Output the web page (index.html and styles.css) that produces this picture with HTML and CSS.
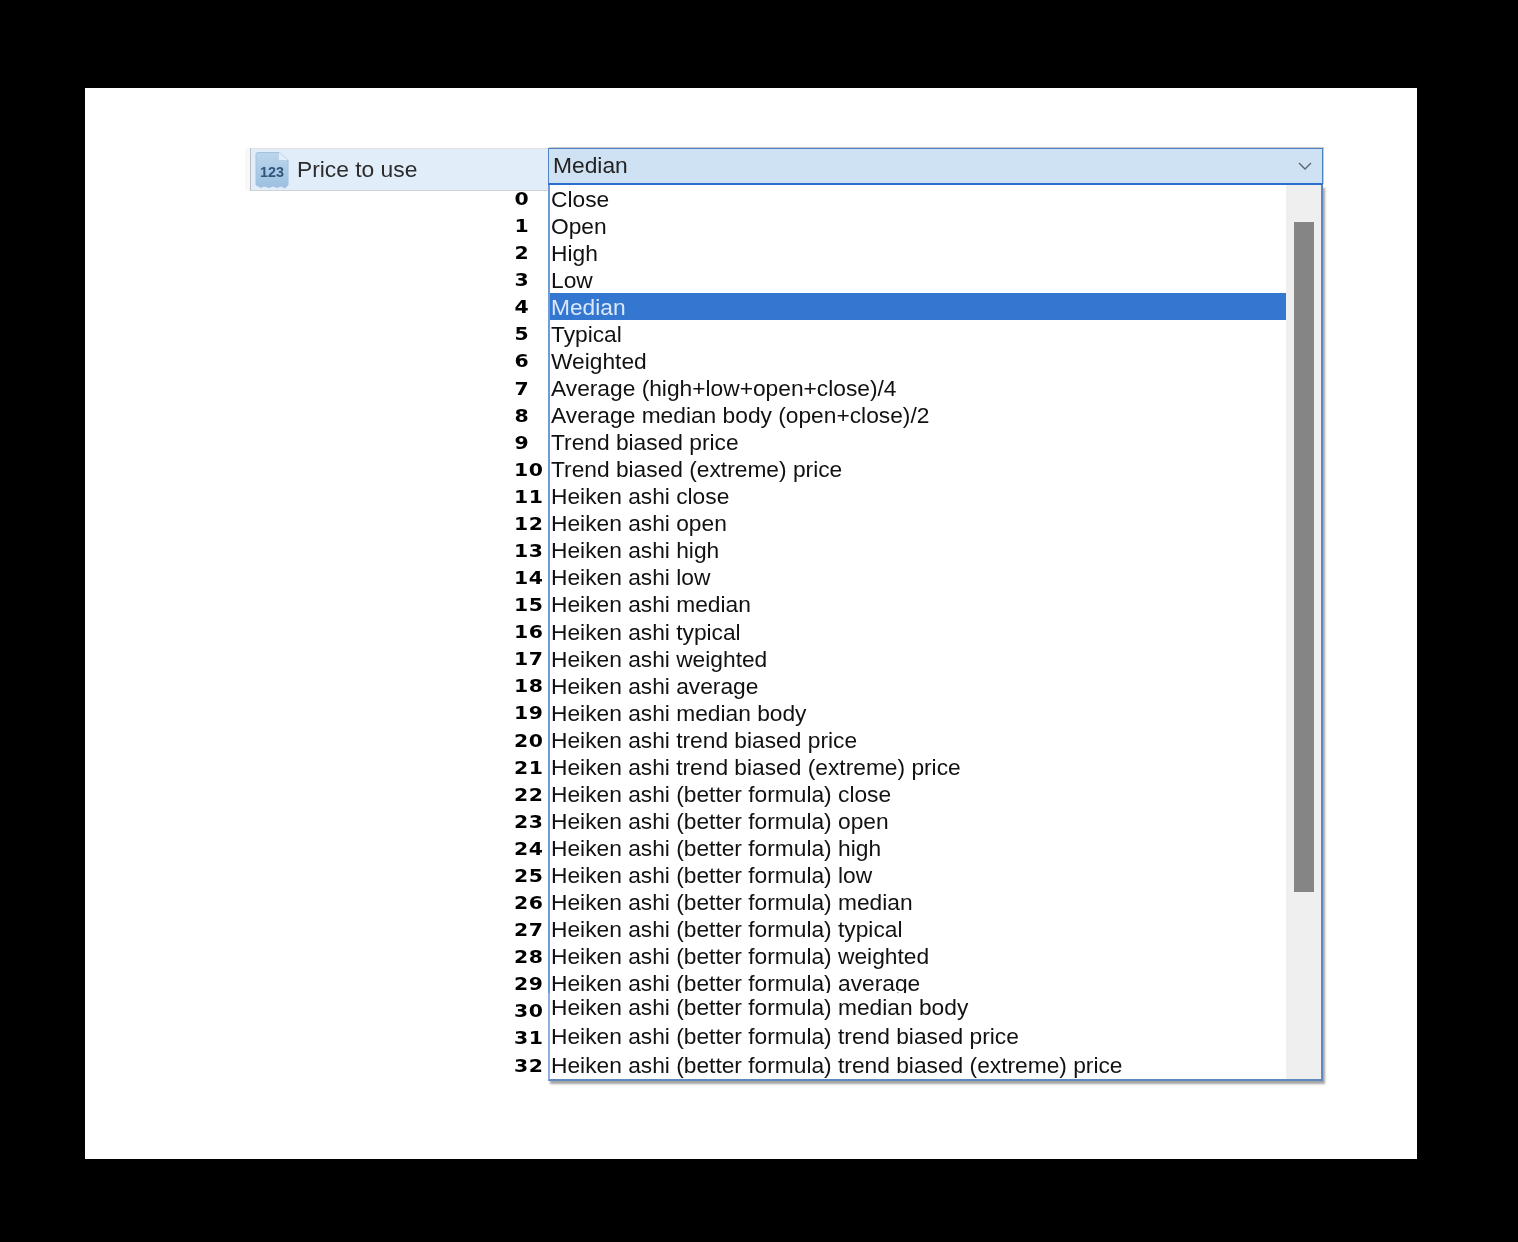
FILE: index.html
```html
<!DOCTYPE html>
<html lang="en">
<head>
<meta charset="utf-8">
<title>Price to use</title>
<link rel="stylesheet" href="styles.css">
</head>
<body>
<main class="panel">
  <div class="head">
    <div class="label">
      <svg class="icon" width="36" height="38" viewBox="0 0 36 38">
        <defs>
          <linearGradient id="sheet" x1="0" y1="0" x2="0" y2="1">
            <stop offset="0" stop-color="#bcd5ec"/>
            <stop offset="1" stop-color="#9cc0e2"/>
          </linearGradient>
        </defs>
        <path d="M4 1.500H25L34 9V34L31 37L27 35L23 36.500L19 35L15 36.500L10 35L7 36.500L2 34V3.500Q2 1.500 4 1.500Z" fill="url(#sheet)" stroke="#a3c2df"/>
        <path d="M25 1.500V9H34Z" fill="#e3eef8"/>
        <text class="icon-text" x="6" y="26" textLength="24" lengthAdjust="spacingAndGlyphs">123</text>
      </svg>
      <span>Price to use</span>
    </div>
    <div class="combo">
      <span>Median</span>
      <svg width="14" height="8" viewBox="0 0 14 8"><path d="M1 1L7 7L13 1" fill="none" stroke="#5b6570" stroke-width="1.400"/></svg>
    </div>
  </div>
  <div class="body">
    <div class="nums">
      <div class="n s">0</div><div class="n s">1</div><div class="n s">2</div><div class="n s">3</div><div class="n s">4</div><div class="n s">5</div><div class="n s">6</div><div class="n s">7</div><div class="n s">8</div><div class="n s">9</div>
      <div class="n">10</div><div class="n">11</div><div class="n">12</div><div class="n">13</div><div class="n">14</div><div class="n">15</div><div class="n">16</div><div class="n">17</div><div class="n">18</div><div class="n">19</div>
      <div class="n">20</div><div class="n">21</div><div class="n">22</div><div class="n">23</div><div class="n">24</div><div class="n">25</div><div class="n">26</div><div class="n">27</div><div class="n">28</div><div class="n">29</div>
      <div class="n">30</div><div class="n">31</div><div class="n">32</div>
    </div>
    <div class="drop">
      <div class="upper">
        <ul class="items">
          <li>Close</li><li>Open</li><li>High</li><li>Low</li>
          <li class="sel">Median</li>
          <li>Typical</li><li>Weighted</li>
          <li>Average (high+low+open+close)/4</li>
          <li>Average median body (open+close)/2</li>
          <li>Trend biased price</li>
          <li>Trend biased (extreme) price</li>
          <li>Heiken ashi close</li><li>Heiken ashi open</li><li>Heiken ashi high</li><li>Heiken ashi low</li><li>Heiken ashi median</li><li>Heiken ashi typical</li><li>Heiken ashi weighted</li><li>Heiken ashi average</li><li>Heiken ashi median body</li><li>Heiken ashi trend biased price</li><li>Heiken ashi trend biased (extreme) price</li>
          <li>Heiken ashi (better formula) close</li><li>Heiken ashi (better formula) open</li><li>Heiken ashi (better formula) high</li><li>Heiken ashi (better formula) low</li><li>Heiken ashi (better formula) median</li><li>Heiken ashi (better formula) typical</li><li>Heiken ashi (better formula) weighted</li><li>Heiken ashi (better formula) average</li>
        </ul>
        <div class="track"><div class="thumb"></div></div>
      </div>
      <div class="lower">
        <ul class="items tail">
          <li>Heiken ashi (better formula) median body</li>
          <li>Heiken ashi (better formula) trend biased price</li>
          <li>Heiken ashi (better formula) trend biased (extreme) price</li>
        </ul>
        <div class="track"></div>
      </div>
    </div>
  </div>
</main>
</body>
</html>
```
FILE: styles.css
```css
* { box-sizing: border-box; }
html, body { margin: 0; height: 100%; }
body {
  background: #000;
  padding: 88px 101px 83px 85px;
  font-family: "Liberation Sans", sans-serif;
  color: #111;
}
.panel {
  background: #fff;
  height: 1071px;
  padding: 60px 94px 0 165px;
  overflow: hidden;
}
.head {
  display: flex;
  height: 43px;
  width: 1073px;
  filter: blur(0.35px);
}
.label {
  width: 298px;
  height: 43px;
  background: #e1edf9;
  border-left: 1px solid #b9bdc2;
  border-top: 1px solid #e2e2e2;
  border-bottom: 1px solid #cfd3d8;
  box-shadow: -5px 0 0 #f8f8f8;
  display: flex;
  align-items: center;
  gap: 7px;
  padding: 0 0 0 3px;
  font-size: 22.800px;
  color: #2c2c2c;
}
.icon { flex: none; }
.icon-text {
  font-family: "Liberation Sans", sans-serif;
  font-size: 15px;
  font-weight: 700;
  fill: #2f567c;
}
.combo {
  width: 775px;
  height: 37px;
  background: #cfe2f4;
  border: 1px solid #4d82c4;
  border-bottom: 2px solid #2a6fd0;
  box-shadow: 1px -1px 0 #c9c9c9;
  display: flex;
  align-items: center;
  justify-content: space-between;
  padding: 0 10px 1px 4px;
  font-size: 22.800px;
  color: #222;
}
.body {
  display: flex;
  margin-top: -6px;
  margin-left: 264px;
  filter: blur(0.35px);
}
.nums {
  width: 34px;
  padding-top: 1px;
}
.n {
  height: 27.090px;
  line-height: 27px;
  font-family: "DejaVu Sans", sans-serif;
  font-size: 17px;
  font-weight: 700;
  color: #000;
  letter-spacing: 0.500px;
  white-space: nowrap;
  transform: scaleX(1.2);
  transform-origin: 0 50%;
}
.n.s { width: 12.500px; text-align: center; letter-spacing: 0; }
.drop {
  width: 775px;
  height: 896px;
  display: flex;
  flex-direction: column;
  box-shadow: 2px 3px 2px rgba(90, 90, 90, 0.55);
}
.upper {
  height: 808px;
  display: flex;
  overflow: hidden;
  border-left: 2px solid #6f9bd6;
  border-right: 2px solid #5f87c0;
}
.lower {
  height: 88px;
  display: flex;
  border-left: 2px solid #8fb0dc;
  border-right: 2px solid #5f87c0;
  border-bottom: 2px solid #5f87c0;
}
.items {
  list-style: none;
  margin: 0;
  padding: 0;
  flex: 1;
  font-size: 22.750px;
  min-width: 0;
}
.items li {
  height: 27.040px;
  line-height: 28px;
  padding-left: 1px;
  white-space: nowrap;
}
.items li.sel { background: #3477d0; color: #dbe8fa; }
.tail li { height: 29px; padding-left: 1px; }
.track {
  width: 35px;
  flex: none;
  background: #efefef;
  padding: 37px 7px 0 8px;
}
.thumb { height: 670px; background: #858585; }
```
